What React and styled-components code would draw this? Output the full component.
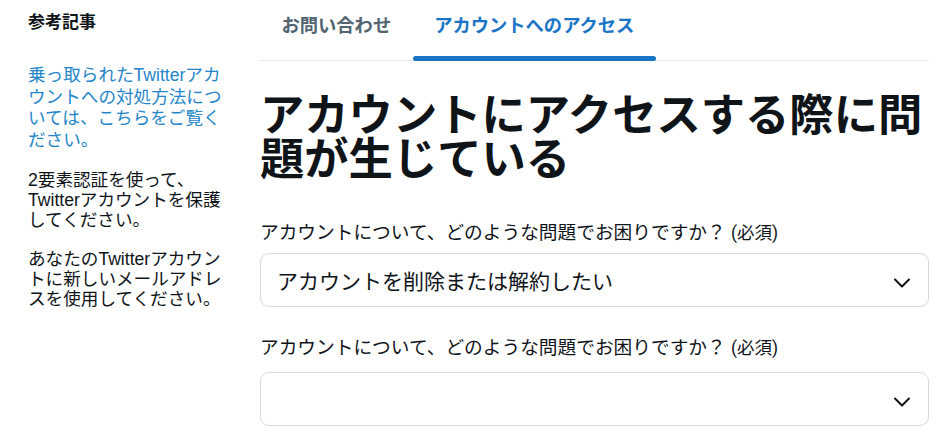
import React from "react";
import styled, { createGlobalStyle } from "styled-components";

const Global = createGlobalStyle`
  html, body { margin: 0; padding: 0; background: #ffffff; }
  body {
    font-family: "Liberation Sans", "Noto Sans CJK JP", sans-serif;
    color: #0f1419;
  }
  * { box-sizing: border-box; }
`;

const Page = styled.div`
  display: flex;
  gap: 20px;
  padding: 0 18px 0 28px;
  width: 947px;
`;

const Sidebar = styled.aside`
  width: 212px;
  flex: none;
  padding-top: 11px;
`;

const SideTitle = styled.h3`
  margin: 0;
  font-size: 17px;
  line-height: 24px;
  font-weight: 700;
  color: #0f1419;
`;

const SideLink = styled.a`
  display: block;
  margin-top: 30px;
  font-size: 17.6px;
  line-height: 21.5px;
  color: #2585c8;
  text-decoration: none;
  white-space: nowrap;
`;

const SideText = styled.p`
  margin: 19px 0 0;
  font-size: 17.6px;
  line-height: 20px;
  color: #0f1419;
  white-space: nowrap;
`;

const Main = styled.main`
  flex: 1;
  min-width: 0;
`;

const TabBar = styled.nav`
  display: flex;
  height: 61px;
  border-bottom: 1px solid #e3e8ec;
`;

const Tab = styled.div`
  position: relative;
  height: 60px;
  padding: 14px 21.5px 0;
  font-size: 18.3px;
  line-height: 24px;
  font-weight: 700;
  color: ${(p) => (p.$active ? "#1a74c6" : "#536471")};
  white-space: nowrap;

  &::after {
    content: "";
    display: ${(p) => (p.$active ? "block" : "none")};
    position: absolute;
    left: 0;
    right: 0;
    bottom: -1px;
    height: 5px;
    border-radius: 3px;
    background: #1a74c6;
  }
`;

const Heading = styled.h1`
  margin: 29px 0 0;
  font-family: "Noto Sans CJK JP", sans-serif;
  font-size: 44.3px;
  line-height: 44px;
  font-weight: 700;
  color: #0f1419;
`;

const Field = styled.div`
  margin-top: ${(p) => p.$top}px;
`;

const Label = styled.label`
  display: block;
  font-size: 18.7px;
  line-height: 24px;
  color: #0f1419;
  margin-bottom: ${(p) => p.$gap}px;
  white-space: nowrap;
`;

const Required = styled.span`
  font-family: "Roboto", "Noto Sans CJK JP", sans-serif;
  font-size: 17.5px;
`;

const Select = styled.div`
  display: flex;
  align-items: center;
  height: 54px;
  border: 1px solid #d3dadf;
  border-radius: 9px;
  padding: 0 18px 0 16px;
  background: #fff;
`;

const SelectValue = styled.span`
  flex: 1;
  font-family: "Noto Sans CJK JP", sans-serif;
  font-size: 21px;
  line-height: 28px;
  color: #0f1419;
`;

const ChevronIcon = styled.svg`
  width: 16px;
  height: 10px;
  margin-top: 6px;
  flex: none;
`;

const Chevron = () => (
  <ChevronIcon viewBox="0 0 16 10" fill="none">
    <path d="M1 1.5 L8 8.5 L15 1.5" stroke="#0f1419" strokeWidth="2" strokeLinecap="round" strokeLinejoin="round" />
  </ChevronIcon>
);

export default function App() {
  return (
    <>
      <Global />
      <Page>
        <Sidebar>
          <SideTitle>参考記事</SideTitle>
          <SideLink href="#">
            乗っ取られたTwitterアカ<br />
            ウントへの対処方法につ<br />
            いては、こちらをご覧く<br />
            ださい。
          </SideLink>
          <SideText>
            2要素認証を使って、<br />
            Twitterアカウントを保護<br />
            してください。
          </SideText>
          <SideText>
            あなたのTwitterアカウン<br />
            トに新しいメールアドレ<br />
            スを使用してください。
          </SideText>
        </Sidebar>
        <Main>
          <TabBar>
            <Tab>お問い合わせ</Tab>
            <Tab $active>アカウントへのアクセス</Tab>
          </TabBar>
          <Heading>アカウントにアクセスする際に問題が生じている</Heading>
          <Field $top={43}>
            <Label $gap={8}>
              アカウントについて、どのような問題でお困りですか？ <Required>(必須)</Required>
            </Label>
            <Select>
              <SelectValue>アカウントを削除または解約したい</SelectValue>
              <Chevron />
            </Select>
          </Field>
          <Field $top={29}>
            <Label $gap={12}>
              アカウントについて、どのような問題でお困りですか？ <Required>(必須)</Required>
            </Label>
            <Select>
              <SelectValue />
              <Chevron />
            </Select>
          </Field>
        </Main>
      </Page>
    </>
  );
}
